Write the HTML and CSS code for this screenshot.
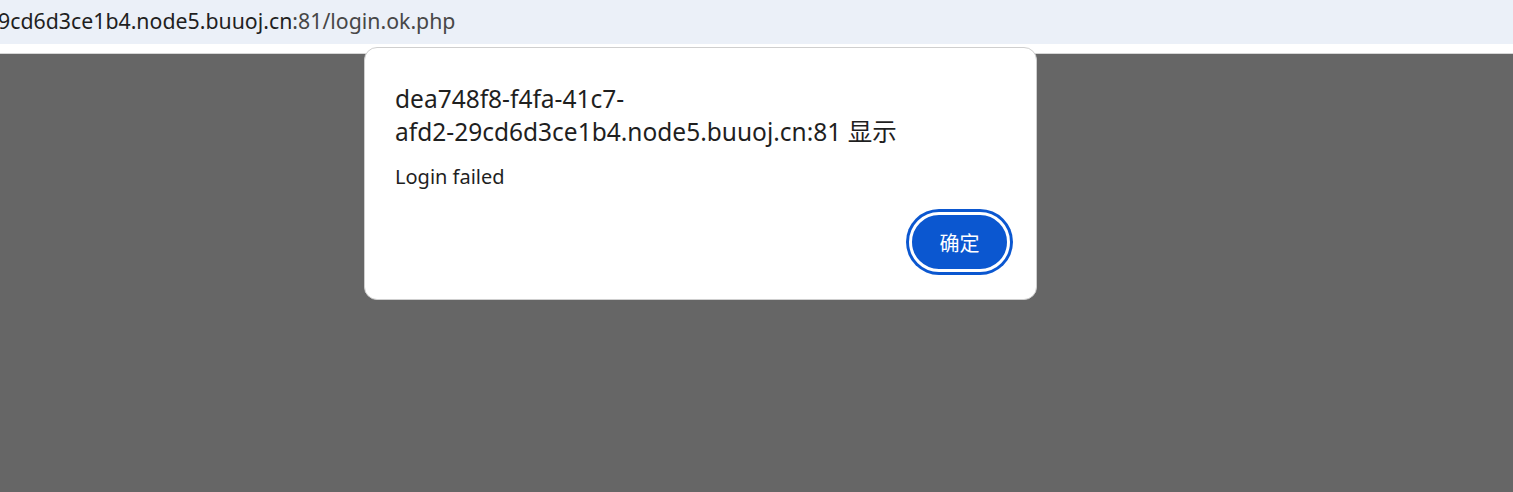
FILE: index.html
```html
<!DOCTYPE html>
<html lang="zh">
<head>
<meta charset="utf-8">
<title>login.ok.php</title>
<link rel="stylesheet" href="styles.css">
</head>
<body>
<div class="page">
  <div class="urlbar">
    <span class="url"><span class="host">9cd6d3ce1b4.node5.buuoj.cn</span><span class="path">:81/login.ok.php</span></span>
  </div>
  <div class="strip"></div>
  <div class="content"></div>
  <div class="dialog">
    <div class="title">dea748f8-f4fa-41c7-<br>afd2-29cd6d3ce1b4.node5.buuoj.cn:81 显示</div>
    <div class="message">Login failed</div>
    <div class="actions">
      <button class="ok">确定</button>
    </div>
  </div>
</div>
</body>
</html>
```

FILE: styles.css
```css
html, body {
  margin: 0;
  padding: 0;
  height: 100%;
  overflow: hidden;
}
body {
  font-family: "Noto Sans", "Open Sans", "Noto Sans CJK SC", sans-serif;
}
.page {
  position: relative;
  height: 492px;
  display: flex;
  flex-direction: column;
  background: #666666;
}
.urlbar {
  height: 44px;
  background: #ebf0f8;
  display: flex;
  align-items: center;
  overflow: hidden;
}
.url {
  margin-left: -2px;
  font-size: 21.3px;
  white-space: nowrap;
  font-family: "Noto Sans", "Open Sans", sans-serif;
  position: relative;
  top: -2px;
}
.host { color: #1f1f1f; }
.path { color: #474747; }
.strip {
  height: 9px;
  background: #ffffff;
  border-bottom: 1px solid #d6d6d6;
}
.content {
  flex: 1;
  background: #666666;
}
.dialog {
  position: absolute;
  left: 364px;
  top: 47px;
  width: 673px;
  height: 253px;
  box-sizing: border-box;
  background: #ffffff;
  border: 1px solid #cfcfcf;
  border-radius: 13px;
  padding: 34px 30px 0 30px;
  display: flex;
  flex-direction: column;
}
.title {
  font-size: 24.5px;
  line-height: 33px;
  color: #1f1f1f;
  font-family: "Noto Sans", "Noto Sans CJK SC", sans-serif;
}
.message {
  margin-top: 16px;
  font-size: 20px;
  line-height: 26px;
  color: #1f1f1f;
}
.actions {
  display: flex;
  justify-content: flex-end;
  margin-top: 22px;
  margin-right: -4px;
}
.ok {
  width: 101px;
  height: 60px;
  box-sizing: border-box;
  border-radius: 30px;
  border: 3px solid #ffffff;
  box-shadow: 0 0 0 3px #0b57d0;
  outline: none;
  background: #0b57d0;
  color: #ffffff;
  font-size: 20px;
  font-family: "Noto Sans CJK SC", sans-serif;
  padding: 0;
  margin: 0;
}
```
